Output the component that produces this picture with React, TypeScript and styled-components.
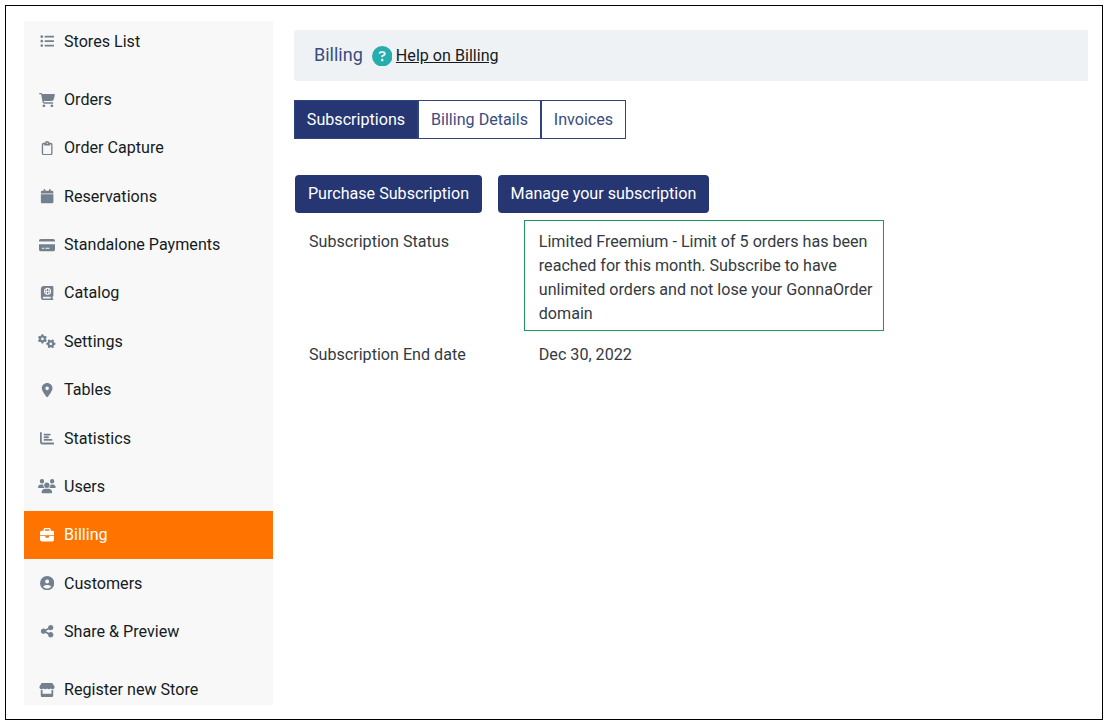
import React from 'react';
import styled, { createGlobalStyle } from 'styled-components';
import type { IconType } from 'react-icons';
import {
  FaListUl, FaCartShopping, FaRegClipboard, FaCalendar, FaCreditCard, FaBookAtlas, FaGears,
  FaLocationDot, FaChartBar, FaUsers, FaBriefcase, FaCircleUser, FaShareNodes, FaStore,
  FaCircleQuestion,
} from 'react-icons/fa6';

const GlobalStyle = createGlobalStyle`
  * { box-sizing: border-box; }
  body {
    margin: 0;
    background: #fff;
    color: #343a40;
    font: 400 16.11px/24.18px Roboto, "Liberation Sans", sans-serif;
  }
`;

const Page = styled.div`
  padding: 5px;
  width: 1108px;
  height: 724px;
`;

const Frame = styled.div`
  display: flex;
  align-items: flex-start;
  gap: 20.6px;
  width: 1098px;
  height: 715px;
  padding: 15px 0 0 18px;
  border: 1px solid #000;
`;

const Sidebar = styled.nav`
  flex: none;
  width: 249.4px;
  height: 684px;
  overflow: hidden;
  background: #f8f8f8;
`;

const NavGroup = styled.div<{ $gap?: number }>`
  margin-top: ${(p) => p.$gap ?? 0}px;
`;

const NavItem = styled.a<{ $active?: boolean }>`
  display: flex;
  align-items: center;
  gap: 8px;
  height: 48.36px;
  padding-left: 14.3px;
  color: ${(p) => (p.$active ? '#fff' : '#151b1e')};
  background: ${(p) => (p.$active ? '#ff7300' : 'transparent')};
`;

const NavLabel = styled.span`
  padding-top: 1.2px;
`;

const IconSlot = styled.span<{ $active?: boolean; $width: number }>`
  display: flex;
  justify-content: center;
  width: 17.7px;
  padding-top: 0.3px;
  color: ${(p) => (p.$active ? '#fff' : '#73818f')};

  svg {
    flex: none;
    width: ${(p) => p.$width}px;
    height: 14.3px;
  }
`;

const Main = styled.main`
  padding-top: 9px;
`;

const TitleBar = styled.header`
  display: flex;
  align-items: center;
  width: 794px;
  height: 51px;
  padding-left: 20px;
  border-radius: 3px 0 0 3px;
  background: #eef2f5;
`;

const Title = styled.h1`
  margin: 0 9px 0 0;
  font-size: 18px;
  font-weight: 400;
  color: #3c4b80;
`;

const HelpIcon = styled(FaCircleQuestion)`
  width: 20.5px;
  height: 20.5px;
  margin: 1px 3.6px 0 0;
  color: #26adae;
`;

const HelpLink = styled.a`
  padding-top: 2px;
  color: #151b1e;
  text-decoration: underline;
`;

const Tabs = styled.div`
  display: flex;
  margin-top: 19px;
`;

const Tab = styled.button<{ $active?: boolean; $width: number }>`
  width: ${(p) => p.$width}px;
  height: 39px;
  padding: 1px 0 0;
  font: inherit;
  color: ${(p) => (p.$active ? '#fff' : '#3c4b80')};
  background: ${(p) => (p.$active ? '#253672' : '#fff')};
  border: 1px solid #31437f;
`;

const Actions = styled.div`
  display: flex;
  gap: 16px;
  margin: 36px 0 0 1px;
`;

const ActionButton = styled.button<{ $width: number }>`
  width: ${(p) => p.$width}px;
  height: 38px;
  padding: 0;
  border: 0;
  border-radius: 4px;
  font: inherit;
  color: #fff;
  background: #253672;
`;

const Details = styled.dl`
  display: grid;
  grid-template-columns: 215px 360px;
  row-gap: 11px;
  margin: 7px 0 0 15px;
`;

const Term = styled.dt`
  padding-top: 9.7px;
`;

const Value = styled.dd<{ $outlined?: boolean }>`
  margin: 0;
  padding: ${(p) => (p.$outlined ? '8.9px 0 0 13.8px' : '0.7px 0 0 14.8px')};
  line-height: ${(p) => (p.$outlined ? '24.1px' : 'inherit')};
  border: ${(p) => (p.$outlined ? '1px solid #1f9560' : '0')};
  height: ${(p) => (p.$outlined ? '111px' : 'auto')};
`;

const EndTerm = styled(Term)`
  padding-top: 0.7px;
`;

type Entry = { label: string; icon: IconType; iconWidth?: number };

const storeEntries: Entry[] = [
  { label: 'Orders', icon: FaCartShopping, iconWidth: 16 },
  { label: 'Order Capture', icon: FaRegClipboard },
  { label: 'Reservations', icon: FaCalendar },
  { label: 'Standalone Payments', icon: FaCreditCard, iconWidth: 16 },
  { label: 'Catalog', icon: FaBookAtlas },
  { label: 'Settings', icon: FaGears, iconWidth: 17.7 },
  { label: 'Tables', icon: FaLocationDot },
  { label: 'Statistics', icon: FaChartBar },
  { label: 'Users', icon: FaUsers, iconWidth: 17.7 },
  { label: 'Billing', icon: FaBriefcase },
  { label: 'Customers', icon: FaCircleUser },
  { label: 'Share & Preview', icon: FaShareNodes },
];

function NavEntry({ label, icon: Icon, iconWidth = 14.3 }: Entry) {
  const active = label === 'Billing';
  return (
    <NavItem $active={active}>
      <IconSlot $active={active} $width={iconWidth}><Icon /></IconSlot>
      <NavLabel>{label}</NavLabel>
    </NavItem>
  );
}

export default function App() {
  return (
    <Page>
      <GlobalStyle />
      <Frame>
        <Sidebar>
          <NavGroup $gap={-3.8}><NavEntry label="Stores List" icon={FaListUl} /></NavGroup>
          <NavGroup $gap={9.8}>
            {storeEntries.map((e) => <NavEntry key={e.label} {...e} />)}
          </NavGroup>
          <NavGroup $gap={9.8}>
            <NavEntry label="Register new Store" icon={FaStore} iconWidth={16} />
          </NavGroup>
        </Sidebar>
        <Main>
          <TitleBar>
            <Title>Billing</Title>
            <HelpIcon />
            <HelpLink>Help on Billing</HelpLink>
          </TitleBar>
          <Tabs>
            <Tab $active $width={124}>Subscriptions</Tab>
            <Tab $width={123}>Billing Details</Tab>
            <Tab $width={85}>Invoices</Tab>
          </Tabs>
          <Actions>
            <ActionButton $width={187}>Purchase Subscription</ActionButton>
            <ActionButton $width={211}>Manage your subscription</ActionButton>
          </Actions>
          <Details>
            <Term>Subscription Status</Term>
            <Value $outlined>
              Limited Freemium - Limit of 5 orders has been reached for this month. Subscribe to have
              unlimited orders and not lose your GonnaOrder domain
            </Value>
            <EndTerm>Subscription End date</EndTerm>
            <Value>Dec 30, 2022</Value>
          </Details>
        </Main>
      </Frame>
    </Page>
  );
}
